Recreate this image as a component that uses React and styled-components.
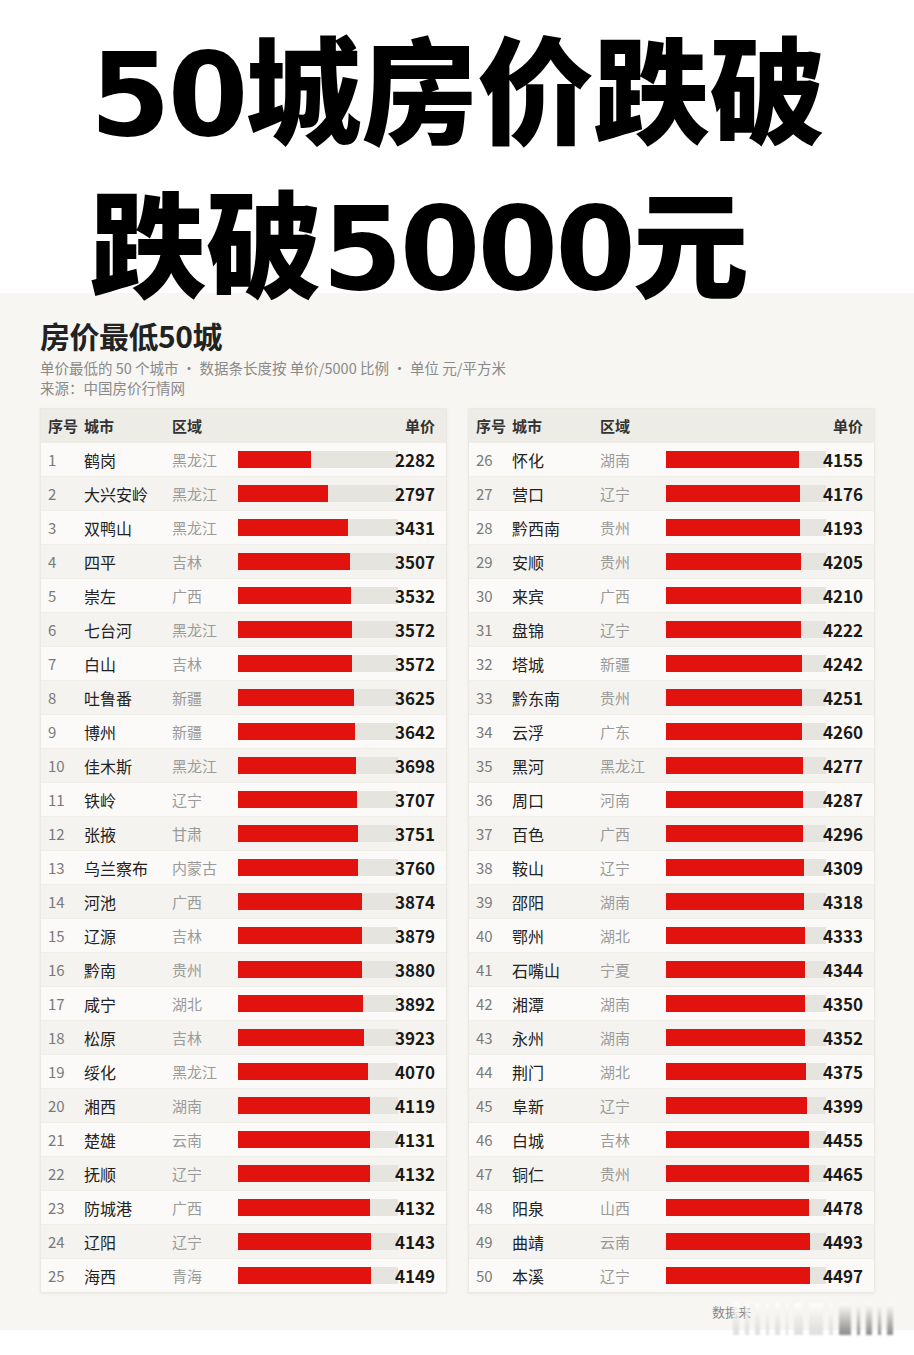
import React from 'react'
import styled, { createGlobalStyle } from 'styled-components'

const left = [
  ['鹤岗', '黑龙江', 2282], ['大兴安岭', '黑龙江', 2797], ['双鸭山', '黑龙江', 3431],
  ['四平', '吉林', 3507], ['崇左', '广西', 3532], ['七台河', '黑龙江', 3572],
  ['白山', '吉林', 3572], ['吐鲁番', '新疆', 3625], ['博州', '新疆', 3642],
  ['佳木斯', '黑龙江', 3698], ['铁岭', '辽宁', 3707], ['张掖', '甘肃', 3751],
  ['乌兰察布', '内蒙古', 3760], ['河池', '广西', 3874], ['辽源', '吉林', 3879],
  ['黔南', '贵州', 3880], ['咸宁', '湖北', 3892], ['松原', '吉林', 3923],
  ['绥化', '黑龙江', 4070], ['湘西', '湖南', 4119], ['楚雄', '云南', 4131],
  ['抚顺', '辽宁', 4132], ['防城港', '广西', 4132], ['辽阳', '辽宁', 4143],
  ['海西', '青海', 4149],
]

const right = [
  ['怀化', '湖南', 4155], ['营口', '辽宁', 4176], ['黔西南', '贵州', 4193],
  ['安顺', '贵州', 4205], ['来宾', '广西', 4210], ['盘锦', '辽宁', 4222],
  ['塔城', '新疆', 4242], ['黔东南', '贵州', 4251], ['云浮', '广东', 4260],
  ['黑河', '黑龙江', 4277], ['周口', '河南', 4287], ['百色', '广西', 4296],
  ['鞍山', '辽宁', 4309], ['邵阳', '湖南', 4318], ['鄂州', '湖北', 4333],
  ['石嘴山', '宁夏', 4344], ['湘潭', '湖南', 4350], ['永州', '湖南', 4352],
  ['荆门', '湖北', 4375], ['阜新', '辽宁', 4399], ['白城', '吉林', 4455],
  ['铜仁', '贵州', 4465], ['阳泉', '山西', 4478], ['曲靖', '云南', 4493],
  ['本溪', '辽宁', 4497],
]

const CityTable = ({ rows, start }) => (
  <Table>
    <Row header>
      <Head>序号</Head>
      <Head>城市</Head>
      <Head>区域</Head>
      <span />
      <Head right>单价</Head>
    </Row>
    {rows.map(([city, area, price], i) => (
      <Row key={city} odd={i % 2 === 1}>
        <Num>{start + i}</Num>
        <City>{city}</City>
        <Area>{area}</Area>
        <Track>
          <Fill style={{ width: `${(price / 5000) * 100}%` }} />
        </Track>
        <Price>{price}</Price>
      </Row>
    ))}
  </Table>
)

const App = () => {
  return (
    <Page>
      <GlobalStyle />
      <Headline>
        <Line><Digits>50</Digits>城房价跌破</Line>
        <Line>跌破<Digits>5000</Digits>元</Line>
      </Headline>
      <Chart>
        <ChartTitle>房价最低50城</ChartTitle>
        <Sub first>单价最低的 50 个城市 · 数据条长度按 单价/5000 比例 · 单位 元/平方米</Sub>
        <Sub>来源：中国房价行情网</Sub>
        <Columns>
          <CityTable rows={left} start={1} />
          <CityTable rows={right} start={26} />
        </Columns>
        <Footer>
          <FootText>数据来</FootText>
          <Watermark>
            {[6, 4, 5, 3, 5, 2, 9, 14, 4, 12, 3, 6, 3, 6].map((w, i) => (
              <Strip key={i} w={w} dark={i > 8} />
            ))}
          </Watermark>
        </Footer>
      </Chart>
    </Page>
  )
}

export default App

const GlobalStyle = createGlobalStyle`
  body {
    margin: 0;
    background: #fff;
    font-family: "Noto Sans CJK SC", "Noto Sans", sans-serif;
  }
`

const Page = styled.div`
  width: 914px;
  height: 1355px;
  background: #fff;
  overflow: hidden;
`

const Headline = styled.div`
  display: flex;
  flex-direction: column;
  gap: 38px;
  height: 293px;
  padding: 26px 0 0 90px;
  box-sizing: border-box;
  position: relative;
  z-index: 1;
`

const Line = styled.div`
  font-size: 116px;
  font-weight: 900;
  line-height: 116px;
  height: 116px;
  color: #000;
  white-space: nowrap;
`

const Digits = styled.span`
  display: inline-block;
  font-family: "DejaVu Sans", sans-serif;
  font-weight: 700;
  letter-spacing: -3px;
  line-height: 116px;
`

const Chart = styled.div`
  background: #f7f6f2;
  padding: 24px 39px 0 40px;
  height: 1037px;
  box-sizing: border-box;
`

const ChartTitle = styled.div`
  font-size: 30px;
  font-weight: 700;
  color: #222;
  line-height: 36px;
  letter-spacing: -0.5px;
`

const Sub = styled.div`
  font-size: 14.5px;
  color: #8a8a8a;
  line-height: 20px;
  margin-top: ${(p) => (p.first ? 5 : 0)}px;
  white-space: nowrap;
`

const Columns = styled.div`
  display: grid;
  grid-template-columns: 407px 407px;
  gap: 21px;
  margin-top: 10px;
`

const Table = styled.div`
  background: #faf9f6;
  border: 1px solid #ebe9e4;
  box-shadow: 0 1px 3px rgba(0, 0, 0, 0.06);
`

const Row = styled.div`
  display: grid;
  grid-template-columns: 36px 88px 66px 160px 1fr;
  align-items: center;
  height: ${(p) => (p.header ? 33 : 34)}px;
  padding: 0 11px 0 7px;
  background: ${(p) => (p.header ? '#eeece7' : p.odd ? '#f4f3ef' : '#fbfaf8')};
  border-top: ${(p) => (p.header ? 'none' : '1px solid #f0eee9')};
  box-sizing: border-box;
`

const Head = styled.span`
  font-size: 15px;
  font-weight: 700;
  color: #333;
  white-space: nowrap;
  text-align: ${(p) => (p.right ? 'right' : 'left')};
`

const Num = styled.span`
  font-size: 15px;
  color: #7a7a7a;
`

const City = styled.span`
  font-size: 16px;
  color: #222;
  white-space: nowrap;
`

const Area = styled.span`
  font-size: 15px;
  color: #9a9a9a;
  white-space: nowrap;
`

const Track = styled.div`
  height: 17px;
  background: #e6e4df;
`

const Fill = styled.div`
  height: 100%;
  background: #e2130f;
`

const Price = styled.span`
  justify-self: end;
  font-size: 17px;
  font-weight: 700;
  color: #1a1a1a;
  margin-left: -10px;
  position: relative;
`

const Footer = styled.div`
  display: flex;
  justify-content: flex-end;
  align-items: center;
  height: 36px;
  position: relative;
  margin-right: -18px;
`

const FootText = styled.span`
  font-size: 13px;
  color: #888;
  width: 181px;
`

const Watermark = styled.div`
  position: absolute;
  right: 0;
  top: 10px;
  display: flex;
  gap: 6px;
  height: 32px;
  align-items: stretch;
`

const Strip = styled.div`
  width: ${(p) => p.w}px;
  background: linear-gradient(
    to bottom,
    rgba(255, 255, 255, 0.9),
    ${(p) => (p.dark ? 'rgba(90, 90, 90, 0.7)' : 'rgba(200, 200, 200, 0.6)')}
  );
  filter: blur(1px);
`
